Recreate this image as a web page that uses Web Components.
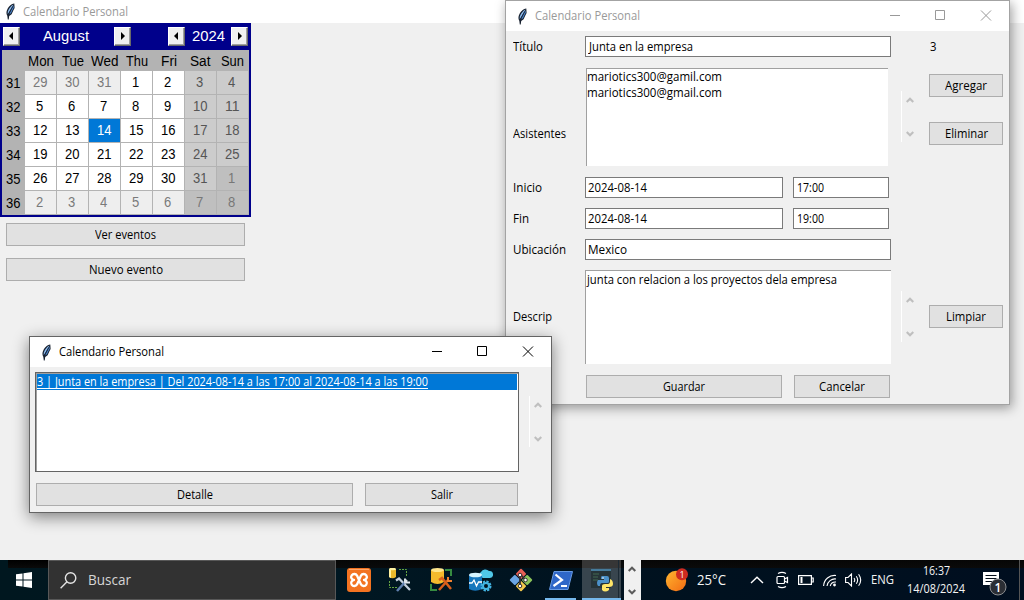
<!DOCTYPE html>
<html lang="es">
<head>
<meta charset="utf-8">
<title>Calendario Personal</title>
<style>
html,body{margin:0;height:100%;overflow:hidden}
body{font:12px "Open Sans","Noto Sans",sans-serif;color:#000;background:#f0f0f0}
</style>
</head>
<body>
<desk-top></desk-top>
<script>
const define=(name,css,html,init)=>{
  const t=document.createElement('template');
  t.innerHTML=`<style>*{box-sizing:border-box}${css}</style>${html}`;
  customElements.define(name,class extends HTMLElement{
    constructor(){super();this.attachShadow({mode:'open'}).append(t.content.cloneNode(true));}
    connectedCallback(){if(init)init(this,this.shadowRoot);}
  });
};

/* A text run condensed horizontally so that it takes the width in "w" */
define('fit-text',':host{display:inline-block;white-space:nowrap;line-height:16px}span{display:inline-block;transform-origin:0 0}','<span><slot></slot></span>',(el,r)=>{
  const s=r.querySelector('span'),w=+el.getAttribute('w');
  if(w){
    const n=s.getBoundingClientRect().width;
    s.style.transform=`scaleX(${w/n})`;
    s.style.marginRight=(w-n)+'px';
  }
});

define('tk-feather',':host{display:block;width:11px;height:17px}svg{display:block}',
`<svg width="11" height="17" viewBox="0 0 11 17"><path d="M9.300.4C6 .8 2.800 4 1.700 8 1.200 9.800 1.500 11.400 2.300 12.800L2.800 16.500H3.700L4.200 13 6.600 11.200 8.300 7.600 9.600 5Z" fill="#17202e"/><path d="M8.600 1.600C6.200 2.600 3.900 5.400 2.800 8.600L2.700 11.200 6.500 5Z" fill="#8dbcf0"/><path d="M8.700 2.600 4 11.500 6 10.300 7.400 7.200 8.800 4.600Z" fill="#4a86cf"/><path d="M7.600 3.400 3.300 12" stroke="#1a2a40" stroke-width=".7"/></svg>`);

define('tk-button',`:host{display:flex;align-items:center;justify-content:center;height:23px;background:#e1e1e1;border:1px solid #adadad;box-sizing:border-box}`,'<slot></slot>');
define('tk-entry',`:host{display:flex;align-items:center;height:21px;background:#fff;border:1px solid #7a7a7a;box-sizing:border-box;padding-left:2px}`,'<slot></slot>');
define('tk-scroll',`:host{display:flex;width:17px;height:51px;border-left:1px solid #fff;flex-direction:column;justify-content:space-between;align-items:center;padding:6px 1px 5px 0;box-sizing:border-box;margin-bottom:2px}svg{display:block}`,
`<svg width="8" height="6"><path d="M.7 5 4 1.700 7.300 5" fill="none" stroke="#bfbfbf" stroke-width="2.200"/></svg><svg width="8" height="6"><path d="M.7 1 4 4.300 7.300 1" fill="none" stroke="#bfbfbf" stroke-width="2.200"/></svg>`);

define('win-frame',`
:host{display:flex;flex-direction:column;border:1px solid var(--edge);box-sizing:border-box;background:#f0f0f0;box-shadow:var(--shadow)}
header{display:flex;align-items:center;height:30px;background:#fff;padding-left:11px;color:var(--ink);flex:none}
fit-text{margin:0 auto 0 7px}
svg{display:block;margin-right:5px}
main{flex:1;min-height:0;display:grid}`,
`<header><tk-feather></tk-feather><fit-text w="105">Calendario Personal</fit-text>
<svg width="118" height="30" fill="none" stroke="currentColor"><path d="M4 14.500H14M49.500 9.500H58.500V18.500H49.500Z"/><path d="M95 9.500 105 19.500M105 9.500 95 19.500"/></svg></header><main><slot></slot></main>`);

define('arrow-key',`:host{display:flex;align-items:center;justify-content:center;width:17px;height:19px;background:#f0f0f0;border:1px solid;border-color:#fff #696969 #696969 #fff;box-shadow:inset -1px -1px #a0a0a0;box-sizing:border-box;padding-right:2px}svg{display:block}:host([next]){padding-right:0}:host([next]) svg{transform:scaleX(-1)}`,
`<svg width="4" height="8"><path d="M0 4 4 0V8Z"/></svg>`);

define('month-calendar',`
:host{display:block;width:251px;height:194px;background:#00008b;font-family:"Liberation Sans",Arial,sans-serif;font-size:14px}
header{display:flex;align-items:center;height:27px;padding:0 3px 1px;color:#fff;font-size:15px}
.m{display:flex;align-items:center;justify-content:space-between;width:128px}
.y{display:flex;align-items:center;justify-content:space-between;width:80px;margin-left:auto}
.m fit-text{margin-right:2px}
.grid{display:grid;grid-template-columns:23px repeat(7,32px);grid-template-rows:21px repeat(6,24px);background:#b3b3b3;margin:0 2px}
.grid>div{display:flex;align-items:center;justify-content:center}
.grid .h{padding:1px 1px 0 0}
.grid .d{border:solid #b3b3b3;border-width:0 1px 1px 0;background:#fff;padding:0 1px 1px 0}
.grid .o{background:#eee;color:#7a7a7a}
.grid .e{background:#ccc;color:#555}
.grid .e.o{background:#bfbfbf;color:#777}
.grid .s{background:#0078d7;color:#fff}
.grid .w{padding:0 1px 0 0}`,
`<header><div class="m"><arrow-key></arrow-key><fit-text w="46">August</fit-text><arrow-key next></arrow-key></div><div class="y"><arrow-key></arrow-key><fit-text w="33">2024</fit-text><arrow-key next></arrow-key></div></header><div class="grid"></div>`,
(el,r)=>{
  let h='<div></div>'+['Mon','Tue','Wed','Thu','Fri','Sat','Sun'].map((d,i)=>`<div class="h"><fit-text w="${[26,22,27.5,22,16,20.5,23][i]}">${d}</fit-text></div>`).join('');
  for(let w=0;w<6;w++){
    h+=`<div class="w"><fit-text w="14.500">${31+w}</fit-text></div>`;
    for(let c=0;c<7;c++){
      const k=w*7+c,n=k<3?29+k:k<34?k-2:k-33,out=k<3||k>33;
      h+=`<div class="d${out?' o':''}${c>4?' e':''}${k===16?' s':''}"><fit-text w="${n>9?14.5:7.25}">${n}</fit-text></div>`;
    }
  }
  r.querySelector('.grid').innerHTML=h;
});

define('event-form',`
:host{display:grid;grid-template-columns:79px 306px 38px 74px;grid-template-rows:31px 110px 31px 31px 31px 104px 35px;align-items:center}
.l{padding-left:7px}
.two{display:grid;grid-template-columns:198px 96px;gap:10px}
.list,.txt{background:#fff;border:solid #a0a0a0;border-width:1px 0 0 1px;display:flex;flex-direction:column}
.list{height:98px;width:302px;margin-left:1px}
.txt{height:94px;padding:1px 0 0 1px}
tk-scroll{margin-left:10px}
.btns{display:grid;gap:25px}
.acts{display:grid;grid-template-columns:196px 96px;gap:12px;padding-left:1px}
fit-text{justify-self:start}`,
`<fit-text class="l" w="30">Título</fit-text><tk-entry><fit-text w="104" style="padding-left:1px">Junta en la empresa</fit-text></tk-entry><i></i><fit-text w="6.500" style="padding-left:1px">3</fit-text>
<fit-text class="l" w="53" style="padding-top:33px">Asistentes</fit-text><div class="list"><fit-text w="135">mariotics300@gamil.com</fit-text><fit-text w="135">mariotics300@gmail.com</fit-text></div><tk-scroll></tk-scroll><div class="btns" style="margin-bottom:15px"><tk-button><fit-text w="42">Agregar</fit-text></tk-button><tk-button><fit-text w="43">Eliminar</fit-text></tk-button></div>
<fit-text class="l" w="29">Inicio</fit-text><div class="two"><tk-entry><fit-text w="59">2024-08-14</fit-text></tk-entry><tk-entry><fit-text w="27" style="padding-left:1px">17:00</fit-text></tk-entry></div><i></i><i></i>
<fit-text class="l" w="16">Fin</fit-text><div class="two"><tk-entry><fit-text w="59">2024-08-14</fit-text></tk-entry><tk-entry><fit-text w="27" style="padding-left:1px">19:00</fit-text></tk-entry></div><i></i><i></i>
<fit-text class="l" w="53">Ubicación</fit-text><tk-entry><fit-text w="39">Mexico</fit-text></tk-entry><i></i><i></i>
<fit-text class="l" w="39">Descrip</fit-text><div class="txt"><fit-text w="250">junta con relacion a los proyectos dela empresa</fit-text></div><tk-scroll></tk-scroll><tk-button style="margin-bottom:1px"><fit-text w="40">Limpiar</fit-text></tk-button>
<i></i><div class="acts"><tk-button><fit-text w="42">Guardar</fit-text></tk-button><tk-button><fit-text w="46">Cancelar</fit-text></tk-button></div>`);

define('event-list',`
:host{display:grid;grid-template-columns:484px 1fr;grid-template-rows:100px 23px;row-gap:11px;padding:5px 0 0 5px;align-items:center}
.list{height:100px;background:#fff;border:1px solid #646464;box-shadow:inset 1px 1px #a0a0a0;padding:1px}
.row{background:#0078d7;color:#fff;height:16px;display:flex;align-items:center;width:480px}
.row u{text-underline-offset:2px;text-decoration-skip-ink:none}
.acts{display:grid;grid-template-columns:317px 153px;gap:12px;padding-left:1px}
tk-scroll{margin-left:10px}`,
`<div class="list"><div class="row"><fit-text w="391"><u>3 | Junta en la empresa | Del 2024-08-14 a las 17:00 al 2024-08-14 a las 19:00</u></fit-text></div></div><tk-scroll></tk-scroll>
<div class="acts"><tk-button><fit-text w="36">Detalle</fit-text></tk-button><tk-button><fit-text w="22">Salir</fit-text></tk-button></div>`);

define('task-bar',`
:host{display:flex;height:40px;background:linear-gradient(90deg,#00171f,#001722 35%,#00121f 60%,#000e1f);color:#f4f4f4;align-items:center;overflow:hidden}
svg{display:block}
.start{width:48px;height:40px;flex:none;display:flex;align-items:center;justify-content:center;background:linear-gradient(#000,#0a0a0a) 8px 0/40px 8px no-repeat}
.search{width:288px;height:40px;flex:none;background:#323232;border:1px solid #585858;display:flex;align-items:center;padding-left:11px;gap:11px;color:#d6d6d6;font-size:14px}
.apps{display:grid;flex:none;grid-template-columns:40px 41px 41px 39px 41px 39px 2px 39px;height:40px;padding-left:3px;width:288px;background:linear-gradient(#050606,#090a0b) 0 0/100% 8px no-repeat}
.apps>div{display:flex;align-items:center;justify-content:center}
.ps{background:linear-gradient(#76b9ed,#76b9ed) 4px 38px/31px 2px no-repeat}
.py{border-bottom:2px solid #76b9ed;background:linear-gradient(90deg,transparent 36px,#1c2a34 36px,#1c2a34 37px,transparent 37px),linear-gradient(#363636 8px,#38454e 8px)}
.py svg{position:relative;top:1px}
.sc{width:17px;height:40px;flex:none;background:#f0f0f0;display:flex;flex-direction:column;align-items:center;justify-content:space-between;padding:6px 1px 5px 0}
.tray{width:383px;flex:none;height:40px;display:grid;grid-template-columns:26px 42px 13px 24px 26px 22px 26px 20px 39px 68px 49px 1px;grid-template-rows:40px;align-items:center;justify-items:center;padding-left:23px;background:linear-gradient(#060606,#0a0a0a) 0 0/100% 8px no-repeat}
.clock{display:grid;justify-items:center;grid-template-rows:18px 17px;align-items:center;margin-bottom:1px}
.sep{width:1px;height:40px;background:#555}`,
`<div class="start"><svg width="16" height="16" fill="#fff"><path d="M0 2.300 6.500 1.400V7.500H0ZM7.500 1.200 16 0V7.500H7.500ZM0 8.500H6.500V14.600L0 13.700ZM7.500 8.500H16V16L7.500 14.800Z"/></svg></div>
<div class="search"><svg width="17" height="17" fill="none" stroke="#e4e4e4" stroke-width="1.400"><circle cx="10.600" cy="6" r="5.200"/><path d="M7 9.800.6 16.300"/></svg><fit-text w="43">Buscar</fit-text></div>
<div class="apps">
<div><svg width="24" height="24"><rect width="24" height="24" rx="3" fill="#f37321"/><path d="M2 1.500H22" stroke="#ffa669"/><path d="M10 7.600A3.100 3 0 1 0 7 12A3.100 3 0 1 0 10 16.400L14 7.600A3.100 3 0 1 1 17 12A3.100 3 0 1 1 14 16.400L10 7.600" fill="none" stroke="#fff" stroke-width="2.300" stroke-linejoin="round"/></svg></div>
<div><svg width="24" height="24"><path d="M11 1.500H18.500V9M1.500 13V19.500H9" fill="none" stroke="#65a541" stroke-dasharray="2 1"/><path d="M1 1V9Q4.500 11.500 8 9V1Z" fill="#e9b82c"/><path d="M1 1V9L3 10V1Z" fill="#fff0a0"/><ellipse cx="4.500" cy="1" rx="3.500" ry="1.200" fill="#fff2a1"/><path d="M8 12.500 11 10.500 22 22" fill="none" stroke="#c5d1df" stroke-width="2.300"/><path d="M9 23 18 13" stroke="#6080ae" stroke-width="2.500"/><path d="M17 10.500V14.500H22M16.500 15 19 12" fill="none" stroke="#e0e6ec" stroke-width="2"/></svg></div>
<div><svg width="24" height="24"><path d="M16 2H22V8M2 16V22H8" fill="none" stroke="#368b40" stroke-width="2"/><path d="M2 2V14Q8.500 18 15 14V2Z" fill="#f4ba2d"/><ellipse cx="8.500" cy="2" rx="6.500" ry="2" fill="#ffe58b"/><path d="M10 12 13 10 22 21M10 22 19 12" fill="none" stroke="#d9601b" stroke-width="2.500"/><path d="M19 9V13H23" fill="none" stroke="#f38231" stroke-width="2"/></svg></div>
<div><svg width="25" height="24"><path d="M13 9A3 3 0 0 1 13 4A5 5 0 0 1 21 3A3 3 0 0 1 22 10H15Z" fill="#50c8e8"/><path d="M1 7V21Q7 24.500 14 21V7Z" fill="#1677bd"/><ellipse cx="7.500" cy="7" rx="6.500" ry="2.300" fill="#d6f5ff"/><path d="M1 15H4L6 12 8.500 18 10.500 14H14" fill="none" stroke="#fff" stroke-width="1.300"/><circle cx="18" cy="18" r="4.500" fill="none" stroke="#42b5e3" stroke-width="2" stroke-dasharray="2.300 1.200"/><circle cx="18" cy="18" r="3" fill="none" stroke="#42b5e3" stroke-width="2"/></svg></div>
<div><svg width="24" height="24"><g transform="rotate(45 12 12)"><rect x="3.800" y="12.500" width="7.700" height="7.700" rx="1" fill="#6ca6e4"/><rect x="3.800" y="3.800" width="7.700" height="7.700" rx="1" fill="#e85f55"/><rect x="12.500" y="3.800" width="7.700" height="7.700" rx="1" fill="#8bc45a"/><rect x="12.500" y="12.500" width="7.700" height="7.700" rx="1" fill="#f2c94c"/></g><path d="M11 5V19M11 6 16.500 12" stroke="#332f33" stroke-width="1.800"/><g fill="#fff" stroke="#332f33"><circle cx="11" cy="7" r="1.800"/><circle cx="16.500" cy="12" r="1.800"/><circle cx="11" cy="18" r="1.800"/></g></svg></div>
<div class="ps"><svg width="24" height="19"><path d="M5 .5H23.500L19 18.500H.5Z" fill="#2f67c8" stroke="#6699e2"/><path d="M6.500 3.500 13 9 4.500 15" fill="none" stroke="#fff" stroke-width="2.200"/><path d="M12 15H18" stroke="#fff" stroke-width="2"/></svg></div><i></i>
<div class="py"><svg width="24" height="24"><path d="M1 1H21V20H1Z" fill="#263438"/><path d="M1 1H21V3H1Z" fill="#467b9b"/><path d="M3 6H9M3 9H8M3 12H8" stroke="#426951"/><path d="M12 8H17Q19 8 19 10V14Q19 15 17 15H12Q10 15 10 18H8Q6 15 8 12H14V11H11V10Q11 8 12 8Z" fill="#4b91c9"/><path d="M20 11Q23 12 23 16 23 19 19 19H16V20H19V22Q15 25 12 22V18Q12 16 15 16H18Q20 16 20 13Z" fill="#ffe568"/><circle cx="13" cy="10" r=".8" fill="#fff"/></svg></div>
</div>
<div class="sc"><svg width="8" height="6"><path d="M.7 5 4 1.700 7.300 5" fill="none" stroke="#5b5b5b" stroke-width="2"/></svg><svg width="8" height="6"><path d="M.7 1 4 4.300 7.300 1" fill="none" stroke="#5b5b5b" stroke-width="2"/></svg></div>
<div class="tray">
<svg width="24" height="24"><defs><linearGradient id="s" x1="0" y1="0" x2="1" y2="1"><stop stop-color="#ffb52f"/><stop offset="1" stop-color="#f26b13"/></linearGradient></defs><circle cx="11" cy="13" r="10.200" fill="url(#s)"/><circle cx="17" cy="6.200" r="6" fill="#cf2b20"/><text x="17" y="9.500" text-anchor="middle" fill="#fff" font-size="9">1</text></svg>
<fit-text w="29" style="font-size:14px">25°C</fit-text><i></i>
<svg width="14" height="8" fill="none" stroke="#fff" stroke-width="1.400"><path d="M1 7 7 1.200 13 7"/></svg>
<svg width="14" height="18" fill="none" stroke="#fff" stroke-width="1.200"><rect x="2" y="5.500" width="7.500" height="7" rx="1"/><path d="M9.500 8 12.500 6.500V11.500L9.500 10M3 2.500Q7 .3 11 2.500M3 15.500Q7 17.700 11 15.500"/></svg>
<svg width="16" height="10" fill="none" stroke="#fff" stroke-width="1.200"><path d="M.6.600H13.400V9.400H.600ZM13.500 3H15.200V7H13.500"/><path d="M3.500 2V8" stroke-width="2"/></svg>
<svg width="14" height="13" fill="none" stroke="#fff" stroke-width="1.100"><path d="M.6 12A11 11 0 0 1 13 1.500M4 12A8 8 0 0 1 13 5M7.200 12A5.500 5.500 0 0 1 13 8"/><circle cx="11.500" cy="11" r="1.400" fill="#fff" stroke="none"/></svg>
<svg width="17" height="14" fill="none" stroke="#fff" stroke-width="1.100"><path d="M.6 4.500H3L6.500 1V13L3 9.500H.6ZM9 5Q10.500 7 9 9M11.300 3.200Q14 7 11.300 10.800M13.600 1.200Q17.800 7 13.600 12.800"/></svg>
<fit-text w="23">ENG</fit-text>
<div class="clock"><fit-text w="27">16:37</fit-text><fit-text w="58">14/08/2024</fit-text></div>
<svg style="margin:7px 0 0 12px;justify-self:start" width="26" height="25"><path d="M1 1H17V14H12L9 18V14H1Z" fill="#fff"/><path d="M3.500 4.500H14.500M3.500 7.500H14.500M3.500 10.500H10" stroke="#06101b"/><circle cx="16" cy="16" r="8" fill="#2b2e34" stroke="#8b8d90"/><text x="16" y="20.500" text-anchor="middle" fill="#fff" font-size="12" font-weight="600">1</text></svg>
<div class="sep"></div>
</div>`);

define('desk-top',`
:host{display:flex;flex-direction:column;width:1024px;height:600px;position:relative;overflow:hidden}
.bar{height:23px;background:#fff;display:flex;align-items:center;color:#999;padding-left:5px;gap:7px;flex:none}
.app{flex:1;min-height:0;background:#f0f0f0}
.btns{display:grid;width:239px;gap:12px;margin:6px 0 0 6px}
.form,.events{position:absolute}
.form{left:505px;top:0;width:505px;height:405px;--edge:#a3a3a3;--ink:#999;--shadow:2px 3px 11px rgba(0,0,0,.38)}
.events{left:29px;top:336px;width:523px;height:177px;--edge:#646464;--ink:#000;--shadow:0 4px 15px rgba(0,0,0,.48)}
task-bar{position:relative;flex:none}`,
`<div class="bar"><tk-feather></tk-feather><fit-text w="105">Calendario Personal</fit-text></div>
<div class="app"><month-calendar></month-calendar><div class="btns"><tk-button><fit-text w="61">Ver eventos</fit-text></tk-button><tk-button><fit-text w="74">Nuevo evento</fit-text></tk-button></div></div>
<win-frame class="form"><event-form></event-form></win-frame>
<win-frame class="events"><event-list></event-list></win-frame>
<task-bar></task-bar>`);
</script>
</body>
</html>
